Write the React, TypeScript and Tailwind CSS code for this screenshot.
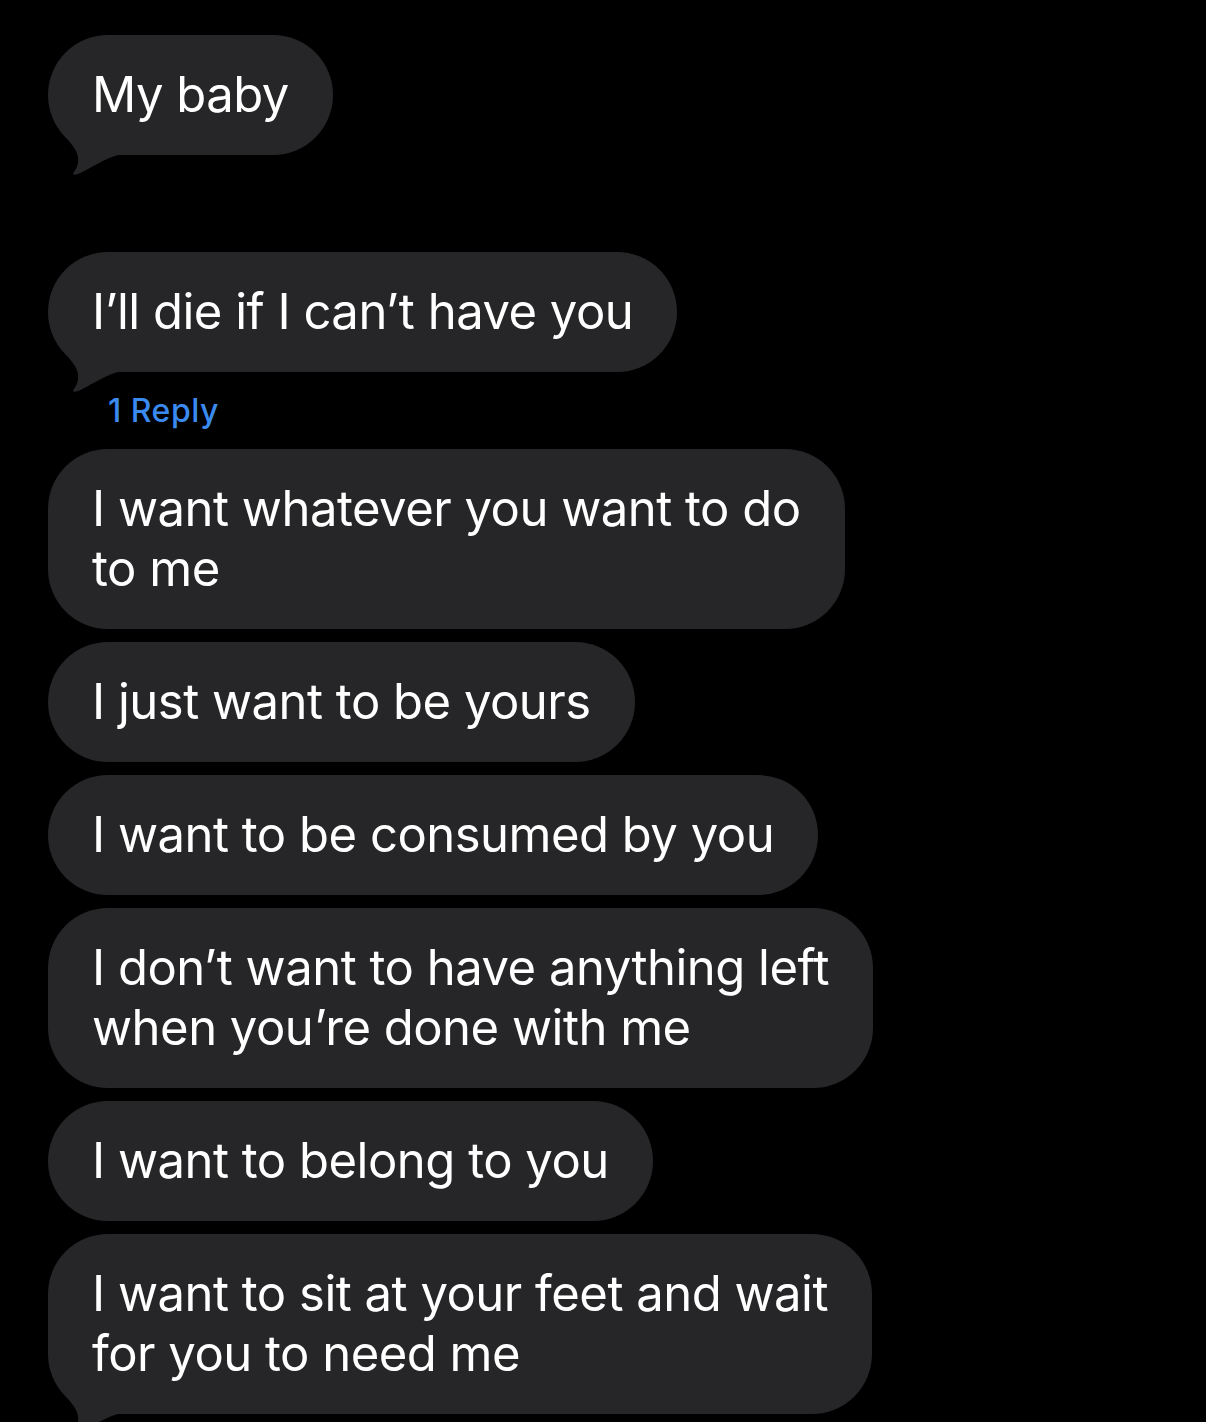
const messages: { lines: string[]; tail?: boolean; reply?: string }[] = [
  { lines: ["I want whatever you want to do", "to me"] },
  { lines: ["I just want to be yours"] },
  { lines: ["I want to be consumed by you"] },
  { lines: ["I don’t want to have anything left", "when you’re done with me"] },
  { lines: ["I want to belong to you"] },
  { lines: ["I want to sit at your feet and wait", "for you to need me"], tail: true },
];

// the little iMessage tail at the bottom-left corner
const Tail = () => (
  <svg
    className="absolute left-0 bottom-[-22px]"
    width="80"
    height="60"
    viewBox="0 0 80 60"
  >
    <path
      d="M 6 3 C 12 15, 24 26, 28 34 C 32 42, 30 50, 26 55 Q 23 59 30 57 C 42 52, 55 42, 70 38 L 80 38 L 80 0 L 6 0 Z"
      fill="#262628"
    />
  </svg>
);

const Bubble = ({ lines, tail }: { lines: string[]; tail?: boolean }) => {
  return (
    <div className="relative rounded-[60px] bg-[#262628] px-[44px] py-[30px] text-[49px] leading-[60px] tracking-[-0.5px] text-white whitespace-nowrap">
      {tail && <Tail />}
      <div className="relative">
        {lines.map((l, i) => (
          <div key={i}>{l}</div>
        ))}
      </div>
    </div>
  );
};

export default function App() {
  return (
    <div
      className="h-[1422px] w-full overflow-hidden bg-black pl-[48px] pt-[35px]"
      style={{ fontFamily: "Inter, 'Noto Sans', sans-serif" }}
    >
      <div className="flex flex-col items-start">
        <Bubble lines={["My baby"]} tail />
        <div className="mt-[97px]">
          <Bubble lines={["I’ll die if I can’t have you"]} tail />
        </div>
        {/* thread reply count */}
        <div className="pl-[60px] pt-[20px] pb-[19px] text-[32px] leading-[38px] tracking-[0.5px] font-medium text-[#3a8af0]">
          1 Reply
        </div>
        <div className="flex flex-col items-start gap-[13px]">
          {messages.map((m, i) => (
            <Bubble key={i} lines={m.lines} tail={m.tail} />
          ))}
        </div>
      </div>
    </div>
  );
}
